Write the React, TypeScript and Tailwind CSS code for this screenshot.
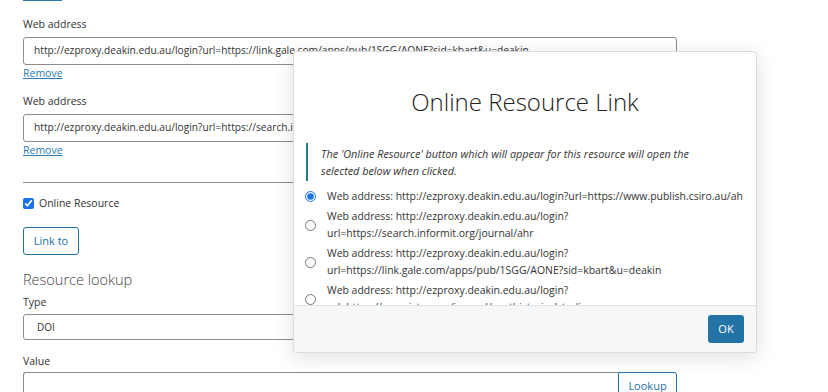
const items = [
  "Web address: http://ezproxy.deakin.edu.au/login?url=https://www.publish.csiro.au/ah",
  "Web address: http://ezproxy.deakin.edu.au/login?url=https://search.informit.org/journal/ahr",
  "Web address: http://ezproxy.deakin.edu.au/login?url=https://link.gale.com/apps/pub/1SGG/AONE?sid=kbart&u=deakin",
  "Web address: http://ezproxy.deakin.edu.au/login?url=https://www.jstor.org/journal/austhistoricalstudies",
];

const Label = ({ children }: { children: React.ReactNode }) => (
  <div className="text-[10.5px] leading-[16px] text-[#333]">{children}</div>
);

const App = () => {
  return (
    <div
      className="relative w-[828px] h-[392px] overflow-hidden bg-white text-[#333]"
      style={{ fontFamily: '"Open Sans", "Noto Sans", sans-serif' }}
    >
      {/* Form */}
      <div className="w-[654px] ml-[23px] flex flex-col">
        <div className="w-[39px] h-[1px] bg-[#2b7bb5]"></div>

        <div className="mt-[15px]">
          <Label>Web address</Label>
          <div className="mt-[5px] h-[28px] border border-[#8c8c8c] rounded-[3px] px-[10px] flex items-center text-[10.2px] whitespace-nowrap overflow-hidden">
            http://ezproxy.deakin.edu.au/login?url=https://link.gale.com/apps/pub/1SGG/AONE?sid=kbart&amp;u=deakin
          </div>
          <a className="block w-fit text-[10.5px] leading-[16px] text-[#2b7bb5] underline">Remove</a>
        </div>

        <div className="mt-[12px]">
          <Label>Web address</Label>
          <div className="mt-[5px] h-[28px] border border-[#8c8c8c] rounded-[3px] px-[10px] flex items-center text-[10.2px] whitespace-nowrap overflow-hidden">
            http://ezproxy.deakin.edu.au/login?url=https://search.informit.org/journal/ahr
          </div>
          <a className="block w-fit text-[10.5px] leading-[16px] text-[#2b7bb5] underline">Remove</a>
        </div>

        <div className="mt-[24px] h-[1px] bg-[#8c8c8c]"></div>

        <label className="mt-[12px] flex items-center gap-[5px] text-[10.5px] leading-[16px]">
          <input type="checkbox" defaultChecked className="w-[11px] h-[11px] m-0 accent-[#1a73e8]" />
          <span>Online Resource</span>
        </label>

        <button className="mt-[16px] w-[56px] h-[28px] border border-[#2271a6] rounded-[3px] text-[11px] text-[#2271a6]">
          Link to
        </button>

        <div className="mt-[14px] text-[14.5px] leading-[22px] font-light text-[#444]">Resource lookup</div>

        <div className="mt-[3px]">
          <Label>Type</Label>
          <div className="mt-[4px] h-[26px] border border-[#8c8c8c] rounded-[3px] px-[13px] flex items-center text-[10px]">
            DOI
          </div>
        </div>

        <div className="mt-[13px]">
          <Label>Value</Label>
          <div className="mt-[3px] flex h-[28px]">
            <div className="flex-1 border border-[#8c8c8c] border-r-0 rounded-l-[3px]"></div>
            <button className="w-[59px] border border-[#2271a6] rounded-r-[3px] text-[11px] text-[#2271a6]">
              Lookup
            </button>
          </div>
        </div>
      </div>

      {/* Modal */}
      <div className="absolute left-[293px] top-[51px] w-[464px] h-[302px] bg-white rounded-[4px] border border-[#dcdcdc] shadow-[0_4px_20px_rgba(0,0,0,0.13)] flex flex-col overflow-hidden">
        <div className="h-[253px] overflow-hidden pl-[11px] pr-[4px] pt-[34px]">
          <h2 className="text-center pr-[7px] text-[24px] leading-[32px] font-light text-[#222]">Online Resource Link</h2>
          <div className="mt-[25px] ml-[1px] border-l-2 border-[#1f7f80] pl-[13px] pr-[29px] py-[2px] text-[10.85px] leading-[17px] italic text-[#333]">
            The 'Online Resource' button which will appear for this resource will open the selected below when clicked.
          </div>
          <div className="mt-[7px] flex flex-col gap-[3px]">
            {items.map((t, i) => (
              <label key={i} className="flex items-center gap-[11px]">
                <input
                  type="radio"
                  name="link"
                  defaultChecked={i === 0}
                  className="w-[11px] h-[11px] m-0 shrink-0 accent-[#1a73e8]"
                />
                <span className="text-[10.45px] leading-[17px] text-[#333] break-words min-w-0">{t}</span>
              </label>
            ))}
          </div>
        </div>
        <div className="flex-1 bg-[#f5f7f9] border-t border-[#dfe2e5] flex items-center justify-end pr-[12px]">
          <button className="w-[36px] h-[28px] bg-[#2473a7] rounded-[3px] text-white text-[11px]">OK</button>
        </div>
      </div>
    </div>
  );
};

export default App;
